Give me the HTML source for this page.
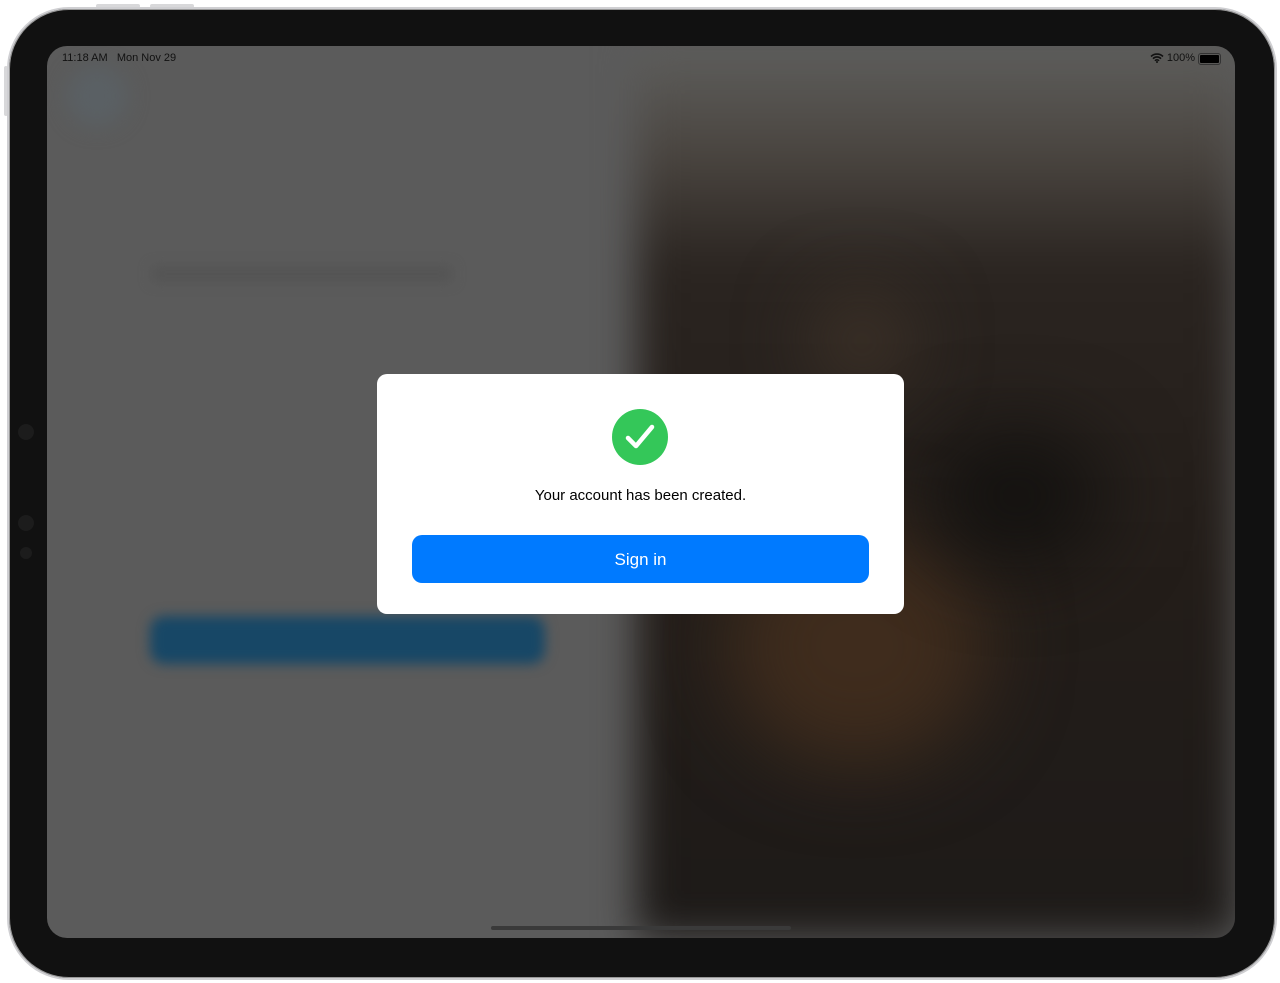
<!DOCTYPE html><html><head><style>
body{margin:0;width:1280px;height:983px;background:#fff;position:relative;overflow:hidden;font-family:"Liberation Sans",sans-serif}
.dev{position:absolute;left:7px;top:7px;width:1266px;height:969px;border-radius:62px;background:#111;border:2px solid #cfcfd2;box-shadow:0 0 0 1px #999 inset}
.btn{position:absolute;background:#d8d8da;border-radius:2px}
.scr{position:absolute;left:47px;top:46px;width:1188px;height:892px;border-radius:20px;overflow:hidden;background:#5b5b5b}
.right{position:absolute;left:590px;top:0;width:600px;height:892px;background:linear-gradient(180deg,#5e5e5c 0%,#4a4540 12%,#2a2420 25%,#231d19 60%,#1d1a18 100%);filter:blur(20px)}
.blob{position:absolute;border-radius:50%;filter:blur(40px)}
</style></head><body>
<div class="btn" style="left:96px;top:4px;width:44px;height:4px"></div>
<div class="btn" style="left:150px;top:4px;width:44px;height:4px"></div>
<div class="btn" style="left:4px;top:66px;width:4px;height:50px"></div>
<div class="dev"></div>
<div class="scr">
 <div class="right"></div>
 <div class="blob" style="left:680px;top:480px;width:260px;height:240px;background:#3f2c1d"></div>
 <div class="blob" style="left:770px;top:250px;width:90px;height:90px;background:#42352a"></div>
 <div class="blob" style="left:880px;top:380px;width:180px;height:140px;background:#141210"></div>
 <div style="position:absolute;left:103px;top:570px;width:395px;height:48px;border-radius:14px;background:#174766;filter:blur(6px)"></div>
 <div style="position:absolute;left:105px;top:220px;width:300px;height:16px;background:#545454;filter:blur(6px)"></div>
 <div style="position:absolute;left:20px;top:20px;width:60px;height:60px;border-radius:50%;background:#5a6064;filter:blur(10px)"></div>
 <div style="position:absolute;left:15px;top:6px;font-size:11px;color:#111">11:18 AM&nbsp;&nbsp;&nbsp;Mon Nov 29</div>
 <div style="position:absolute;right:40px;top:6px;font-size:11px;color:#111">100%</div>
 <svg style="position:absolute;left:1103px;top:7px" width="14" height="10" viewBox="0 0 14 10"><path d="M1 3.5a8.5 8.5 0 0 1 12 0M3 5.7a5.5 5.5 0 0 1 8 0M5 7.8a2.5 2.5 0 0 1 4 0" stroke="#111" stroke-width="1.6" fill="none"/><circle cx="7" cy="9" r="1" fill="#111"/></svg>
 <div style="position:absolute;left:1151px;top:7px;width:19px;height:8px;border:1px solid #333;border-radius:3px;padding:1px;box-sizing:content-box"><div style="width:100%;height:100%;background:#000;border-radius:1px"></div></div>
 <div style="position:absolute;left:444px;top:880px;width:300px;height:4px;border-radius:2px;background:#3a3a3a"></div>
</div>
<div style="position:absolute;left:18px;top:424px;width:16px;height:16px;border-radius:50%;background:#1c1c1c"></div>
<div style="position:absolute;left:18px;top:515px;width:16px;height:16px;border-radius:50%;background:#1c1c1c"></div>
<div style="position:absolute;left:20px;top:547px;width:12px;height:12px;border-radius:50%;background:#1c1c1c"></div>
<div style="position:absolute;left:377px;top:374px;width:527px;height:240px;background:#fff;border-radius:10px">
 <svg style="position:absolute;left:235px;top:35px" width="56" height="56"><circle cx="28" cy="28" r="28" fill="#34c759"/><path d="M16 29l8 8 16-19" stroke="#fff" stroke-width="4.5" fill="none" stroke-linecap="round" stroke-linejoin="round"/></svg>
 <div style="position:absolute;left:0;right:0;top:113px;text-align:center;font-size:15px;color:#000">Your account has been created.</div>
 <div style="position:absolute;left:35px;top:161px;width:457px;height:48px;border-radius:10px;background:#007aff;color:#fff;font-size:17px;text-align:center;line-height:50px">Sign in</div>
</div>
</body></html>
